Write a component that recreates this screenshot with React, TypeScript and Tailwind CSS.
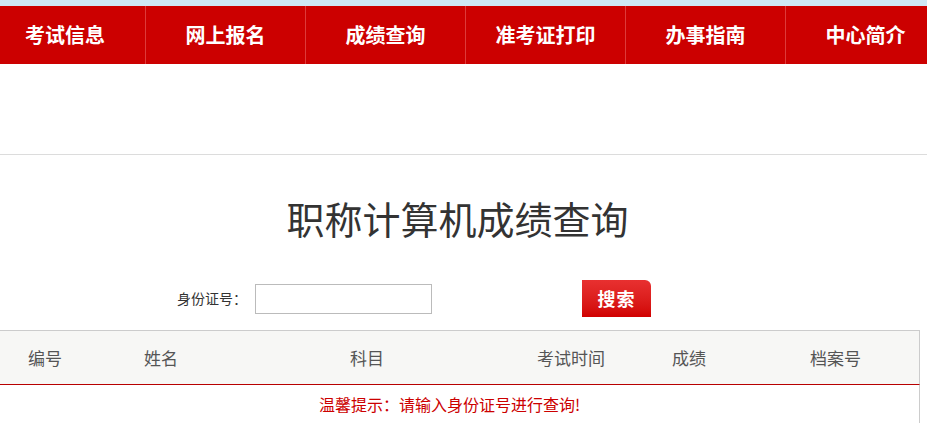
import React from "react";

const NAV_ITEMS = ["考试信息", "网上报名", "成绩查询", "准考证打印", "办事指南", "中心简介"];
// width of each column = distance from its label start to the next label start
const COLUMNS = [
  { label: "编号", w: "w-[116px]" },
  { label: "姓名", w: "w-[206px]" },
  { label: "科目", w: "w-[187px]" },
  { label: "考试时间", w: "w-[135px]" },
  { label: "成绩", w: "w-[138px]" },
  { label: "档案号", w: "w-[80px]" },
];

const App: React.FC = () => {
  return (
    <div className="w-[927px] h-[426px] overflow-hidden bg-white" style={{ fontFamily: '"Noto Sans CJK SC", "Noto Sans", sans-serif' }}>
      {/* top strip */}
      <div className="h-[6px] bg-[#cfe8f6]" />

      {/* nav */}
      <div className="h-[58px] bg-[#cc0000] overflow-hidden">
        <div className="flex w-[960px] ml-[-15px] h-full">
          {NAV_ITEMS.map((item, i) => (
            <div
              key={item}
              className={
                "w-[160px] h-full flex items-center justify-center text-white text-[20px] font-bold " +
                (i > 0 ? "border-l border-l-[#dd3a3a]" : "")
              }
            >
              {item}
            </div>
          ))}
        </div>
      </div>

      <div className="h-[90px]" />
      <div className="h-px bg-[#dcdcdc]" />

      {/* title */}
      <div className="pt-[39px] h-[124px] text-center pr-[12px]">
        <h1 className="text-[38px] leading-[48px] text-[#333] font-normal">职称计算机成绩查询</h1>
      </div>

      {/* search row */}
      <div className="flex items-center pl-[177px] h-[39px]">
        <span className="text-[14px] text-[#333] w-[78px]">身份证号：</span>
        <input type="text" className="w-[177px] h-[30px] border border-[#bbbbbb] outline-none px-1 text-sm" />
        <button
          type="button"
          className="ml-[150px] w-[69px] h-[37px] rounded-tr-[6px] bg-gradient-to-b from-[#e83030] to-[#d10000] text-white text-[18px] font-bold tracking-[1px]"
        >
          搜索
        </button>
      </div>

      {/* table */}
      <div className="mt-[12px] w-[920px]">
        <div className="flex items-center pl-[28px] h-[55px] bg-[#f7f7f5] border-t border-t-[#cccccc] border-r border-r-[#cccccc] border-b border-b-[#b80000] text-[17px] text-[#555]">
          {COLUMNS.map((c) => (
            <div key={c.label} className={c.w + " shrink-0"}>
              {c.label}
            </div>
          ))}
        </div>
        <div className="h-[38px] border-r border-r-[#cccccc] flex items-center pl-[319px] text-[16px] text-[#cc0000]">
          温馨提示：请输入身份证号进行查询!
        </div>
      </div>
    </div>
  );
};

export default App;
